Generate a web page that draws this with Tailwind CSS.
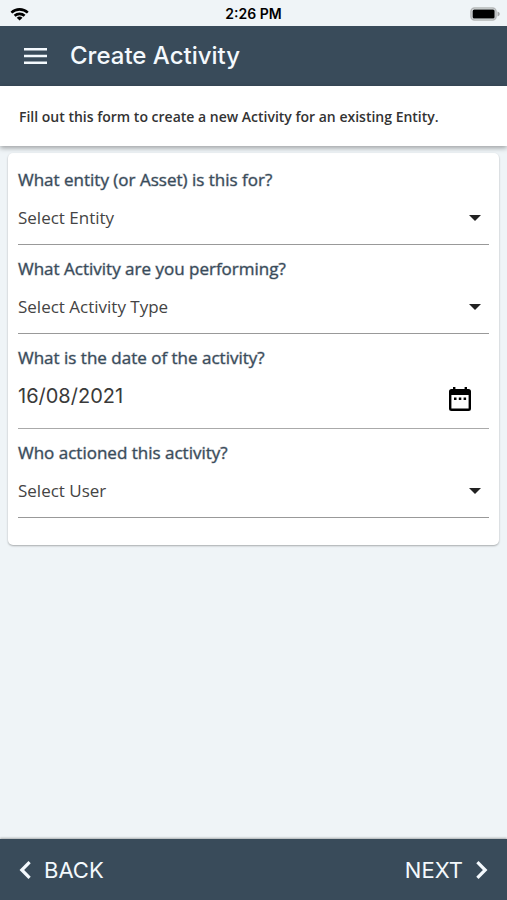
<!DOCTYPE html>
<html lang="en">
<head>
<meta charset="utf-8">
<meta name="viewport" content="width=device-width, initial-scale=1">
<title>Create Activity</title>
<script src="https://cdn.jsdelivr.net/npm/@tailwindcss/browser@4"></script>
</head>
<body class="flex min-h-screen flex-col bg-[#eff4f7] font-['Open_Sans',sans-serif] text-[#444]">
  <div class="grid h-[26px] shrink-0 grid-cols-3 items-center px-[7px] pt-[1px] font-['Inter',sans-serif] text-[14px] font-semibold text-black">
    <svg class="ml-[3px] h-[14px] w-[20px]" viewBox="0 0 20 14" aria-label="Wi-Fi">
      <g fill="none" stroke="#000" stroke-width="2.6">
        <path d="M1.4 5.6a12 12 0 0 1 16.4 0"/>
        <path d="M4.6 8.8a7.4 7.4 0 0 1 10 0"/>
      </g>
      <path d="M9.6 13.6 6.7 10.8a4.3 4.3 0 0 1 5.8 0z"/>
    </svg>
    <span class="text-center">2:26 PM</span>
    <svg class="h-[14px] w-[30px] justify-self-end" viewBox="0 0 30 14" aria-label="Battery full">
      <rect x="1" y="1" width="25" height="12" rx="3.5" fill="#eff4f7" stroke="#b4b6b7" stroke-width="1.6"/>
      <rect x="2.6" y="2.6" width="22" height="9" rx="1.5"/>
      <path d="M27.5 4.6c1.4.4 2.2 1.3 2.2 2.4s-.8 2-2.2 2.4z" fill="#a4a6a7"/>
    </svg>
  </div>

  <header class="flex h-[60px] shrink-0 items-center gap-[23px] bg-[#394b5a] pl-[24px] font-['Inter',sans-serif] text-[#f4f9fd]">
    <button type="button" aria-label="Open menu">
      <svg class="block h-[16px] w-[23px]" viewBox="0 0 23 16" fill="#f4f9fd"><path d="M0 0h23v2.6H0zM0 6.7h23v2.6H0zM0 13.4h23V16H0z"/></svg>
    </button>
    <h1 class="text-[24px] font-medium leading-[32px]">Create Activity</h1>
  </header>

  <p class="relative shrink-0 bg-white px-[19px] pb-[17px] pt-[19px] text-[14px] font-semibold leading-[24px] text-[#333] shadow-[0_2px_5px_rgba(0,0,0,0.35)]">Fill out this form to create a new Activity for an existing Entity.</p>

  <main class="flex-1 px-[8px] pt-[7px]">
    <form class="rounded-[5px] bg-white px-[10px] pb-[27px] pt-[3px] shadow-[0_1px_2px_rgba(0,0,0,0.3)]">
      <div class="flex flex-col pt-[12px]">
        <label for="entity" class="text-[17px] leading-[24px] text-[#394b5a] [-webkit-text-stroke:1px_rgba(57,75,90,0.4)]">What entity (or Asset) is this for?</label>
        <div class="grid items-center border-b border-[#999]">
          <select id="entity" class="col-start-1 row-start-1 h-[52px] w-full appearance-none bg-transparent text-[17px]"><option>Select Entity</option></select>
          <svg class="pointer-events-none col-start-1 row-start-1 mr-[8px] h-[6px] w-[12px] justify-self-end" viewBox="0 0 12 6" fill="#222"><path d="M0 0h12L6 6z"/></svg>
        </div>
      </div>
      <div class="flex flex-col pt-[12px]">
        <label for="type" class="text-[17px] leading-[24px] text-[#394b5a] [-webkit-text-stroke:1px_rgba(57,75,90,0.4)]">What Activity are you performing?</label>
        <div class="grid items-center border-b border-[#999]">
          <select id="type" class="col-start-1 row-start-1 h-[52px] w-full appearance-none bg-transparent text-[17px]"><option>Select Activity Type</option></select>
          <svg class="pointer-events-none col-start-1 row-start-1 mr-[8px] h-[6px] w-[12px] justify-self-end" viewBox="0 0 12 6" fill="#222"><path d="M0 0h12L6 6z"/></svg>
        </div>
      </div>
      <div class="flex flex-col pt-[12px]">
        <label for="date" class="text-[17px] leading-[24px] text-[#394b5a] [-webkit-text-stroke:1px_rgba(57,75,90,0.4)]">What is the date of the activity?</label>
        <div class="flex items-center border-b border-[#aaa] pr-[17px]">
          <input id="date" type="text" value="16/08/2021" class="h-[58px] min-w-0 flex-1 bg-transparent pb-[6px] font-['Inter',sans-serif] text-[20px] text-[#3a3a3a]">
          <button type="button" aria-label="Pick a date">
            <svg class="block h-[26px] w-[24px]" viewBox="0 0 24 26"><path fill="#000" fill-rule="evenodd" d="M5 1h2.4v2h9.2V1H19v2h1.500a2.500 2.500 0 0 1 2.500 2.500v17a2.500 2.500 0 0 1-2.500 2.500h-17A2.500 2.500 0 0 1 1 22.500v-17A2.500 2.500 0 0 1 3.500 3H5zM3.400 9v13.600h17.200V9zM6 11.500h2.500V14H6zm4.800 0h2.500V14h-2.500zm4.800 0h2.500V14h-2.500z"/></svg>
          </button>
        </div>
      </div>
      <div class="flex flex-col pt-[12px]">
        <label for="user" class="text-[17px] leading-[24px] text-[#394b5a] [-webkit-text-stroke:1px_rgba(57,75,90,0.4)]">Who actioned this activity?</label>
        <div class="grid items-center border-b border-[#999]">
          <select id="user" class="col-start-1 row-start-1 h-[52px] w-full appearance-none bg-transparent text-[17px]"><option>Select User</option></select>
          <svg class="pointer-events-none col-start-1 row-start-1 mr-[8px] h-[6px] w-[12px] justify-self-end" viewBox="0 0 12 6" fill="#222"><path d="M0 0h12L6 6z"/></svg>
        </div>
      </div>
    </form>
  </main>

  <nav class="flex h-[61px] shrink-0 items-center justify-between bg-[#394b5a] px-[19px] pt-[1px] font-['Inter',sans-serif] text-[22px] text-[#f4f9fd] shadow-[0_-1px_2px_rgba(0,0,0,0.3)]">
    <button type="button" class="flex items-center gap-[13px]">
      <svg class="h-[18px] w-[12px]" viewBox="0 0 12 18" fill="none" stroke="#f4f9fd" stroke-width="3.2"><path d="M10.6 1.2 2.8 9l7.8 7.8"/></svg>
      BACK
    </button>
    <button type="button" class="flex items-center gap-[13px]">
      NEXT
      <svg class="h-[18px] w-[12px]" viewBox="0 0 12 18" fill="none" stroke="#f4f9fd" stroke-width="3.2"><path d="M1.4 1.2 9.2 9l-7.8 7.8"/></svg>
    </button>
  </nav>
</body>
</html>
